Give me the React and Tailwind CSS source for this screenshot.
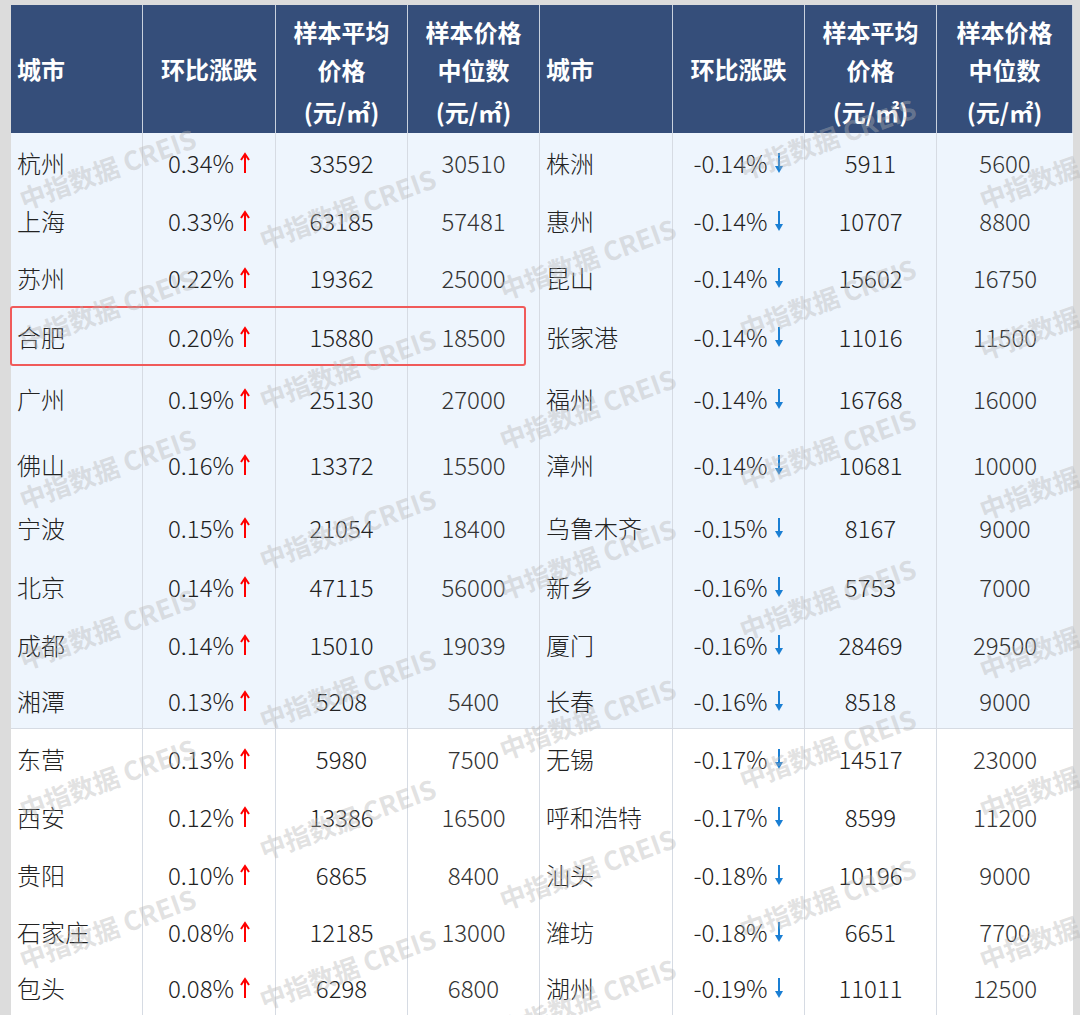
const L=[["杭州","0.34%","33592","30510"],["上海","0.33%","63185","57481"],["苏州","0.22%","19362","25000"],["合肥","0.20%","15880","18500"],["广州","0.19%","25130","27000"],["佛山","0.16%","13372","15500"],["宁波","0.15%","21054","18400"],["北京","0.14%","47115","56000"],["成都","0.14%","15010","19039"],["湘潭","0.13%","5208","5400"],["东营","0.13%","5980","7500"],["西安","0.12%","13386","16500"],["贵阳","0.10%","6865","8400"],["石家庄","0.08%","12185","13000"],["包头","0.08%","6298","6800"]];
const R=[["株洲","-0.14%","5911","5600"],["惠州","-0.14%","10707","8800"],["昆山","-0.14%","15602","16750"],["张家港","-0.14%","11016","11500"],["福州","-0.14%","16768","16000"],["漳州","-0.14%","10681","10000"],["乌鲁木齐","-0.15%","8167","9000"],["新乡","-0.16%","5753","7000"],["厦门","-0.16%","28469","29500"],["长春","-0.16%","8518","9000"],["无锡","-0.17%","14517","23000"],["呼和浩特","-0.17%","8599","11200"],["汕头","-0.18%","10196","9000"],["潍坊","-0.18%","6651","7700"],["湖州","-0.19%","11011","12500"]];
const H=[59,57,58,59,66,66,60,58,58,55,59,58,57,57,55];
const cols="grid grid-cols-[132px_133px_132px_132px_133px_132px_132px_136px]";
function Up(){return <svg width="10" height="22" viewBox="0 0 10 22" className="ml-[6px]"><path d="M5 21V3M1 8L5 2L9 8" stroke="#f00" strokeWidth="2" fill="none"/></svg>}
function Dn(){return <svg width="10" height="22" viewBox="0 0 10 22" className="ml-[6px]"><path d="M5 1V19" stroke="#1a7fd4" strokeWidth="2"/><path d="M1 14L5 21L9 14Z" fill="#1a7fd4"/></svg>}
const wm=[[20,180],[260,220],[500,270],[740,310],[20,320],[260,380],[500,420],[740,460],[980,330],[20,480],[260,540],[500,570],[740,610],[980,490],[20,640],[260,700],[500,730],[740,760],[980,650],[20,790],[260,830],[500,880],[740,910],[980,790],[20,940],[260,980],[500,1010],[980,940],[740,150],[980,180]];
export default function App(){
const cell="border-r border-[#d6dbe3] flex items-center";
return <div className="w-[1080px] h-[1015px] bg-[#dcdcdc] pt-[5px] pl-[11px] relative overflow-hidden" style={{fontFamily:'"Noto Sans CJK SC",sans-serif'}}>
<div className="w-[1062px] bg-white">
<div className={cols+" h-[128px] bg-[#354e7a] text-white font-bold text-[24px] leading-[38px]"}>
{[0,1].map(k=><React.Fragment key={k}>
<div className="border-r border-[#c9d1dd] flex items-center pl-[6px]">城市</div>
<div className="border-r border-[#c9d1dd] flex items-center justify-center">环比涨跌</div>
<div className="border-r border-[#c9d1dd] flex flex-col items-center justify-center pt-[6px]"><span>样本平均</span><span>价格</span><span className="mt-[4px]">(元/㎡)</span></div>
<div className="border-r border-[#c9d1dd] flex flex-col items-center justify-center pt-[6px]"><span>样本价格</span><span>中位数</span><span className="mt-[4px]">(元/㎡)</span></div>
</React.Fragment>)}
</div>
{L.map((l,i)=>{const r=R[i];return <div key={i} className={cols+" text-[24px] text-[#222] font-light "+(i<10?"bg-[#eef5fd]":"bg-white")+(i==9?" border-b border-[#d6dbe3]":"")} style={{height:H[i]}}>
<div className={cell+" pl-[6px]"}>{l[0]}</div>
<div className={cell+" justify-center"}>{l[1]}<Up/></div>
<div className={cell+" justify-center"}>{l[2]}</div>
<div className={cell+" justify-center text-[#333]"}>{l[3]}</div>
<div className={cell+" pl-[6px]"}>{r[0]}</div>
<div className={cell+" justify-center"}>{r[1]}<Dn/></div>
<div className={cell+" justify-center"}>{r[2]}</div>
<div className="flex items-center justify-center text-[#333]">{r[3]}</div>
</div>})}
</div>
<div className="absolute left-[10px] top-[306px] w-[516px] h-[60px] border-2 border-[#f05a5a] rounded-[3px]"></div>
{wm.map(([x,y],i)=><div key={i} className="absolute text-[26px] font-bold text-[#b4b4b4]/40 whitespace-nowrap -rotate-[20deg] origin-left pointer-events-none" style={{left:x,top:y}}>中指数据 CREIS</div>)}
</div>}
import React from "react";
